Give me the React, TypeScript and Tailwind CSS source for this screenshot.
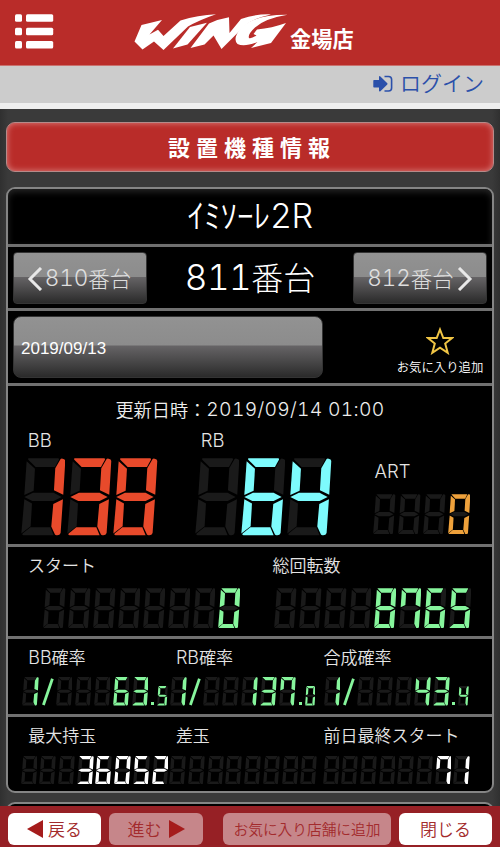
import clsx from 'clsx';
import type { ReactNode } from 'react';

// Segment order: top, upper left, upper right, middle, lower left, lower right, bottom
const SEGMENTS = [
  'M23 1H112Q115 2 114 5L102 27H44L22 5Q20 2 23 1Z',
  'M17 10L42 32L38 98L10 111Z',
  'M119 3Q121 1 125 2Q133 3 133 9L127 110L99 97L103 31Z',
  'M10 117L36 104H98L122 117L98 129H34Z',
  'M10 124L33 137L29 205L1 227Z',
  'M126 124L119 225Q117 232 109 232Q104 233 102 230L91 206L97 138Z',
  'M5 227L28 208H88L98 232H8Q2 232 5 227Z',
];

const LIT: Record<string, string> = {
  ' ': '0000000',
  '0': '1110111',
  '1': '0010010',
  '2': '1011101',
  '3': '1011011',
  '4': '0111010',
  '5': '1101011',
  '6': '1101111',
  '7': '1110010',
  '8': '1111111',
  '9': '1111011',
};

type DigitProps = { char: string; className: string };

const Digit = ({ char, className }: DigitProps) => (
  <svg viewBox="0 0 134 233" preserveAspectRatio="none" className={clsx('shrink-0', className)}>
    {SEGMENTS.map((d, i) => (
      <path key={i} d={d} fill={LIT[char][i] === '1' ? 'currentColor' : '#1a1a1a'} />
    ))}
  </svg>
);

const SIZES = {
  lg: { row: 'gap-[1.7px]', digit: 'w-[44.6px] h-[77.6px]' },
  md: { row: 'gap-[2.4px]', digit: 'w-[22.5px] h-[40.4px]' },
  sm: { row: 'gap-[1.9px]', digit: 'w-[16.8px] h-[28.6px]' },
};

type DisplayProps = { value: string; size: keyof typeof SIZES; className?: string };

const Display = ({ value, size, className }: DisplayProps) => (
  <div className={clsx('flex', SIZES[size].row, className)}>
    {value.split('').map((c, i) => (
      <Digit key={i} char={c} className={SIZES[size].digit} />
    ))}
  </div>
);

type RateProps = { label: ReactNode; whole: string; decimal: string; className?: string };

const Rate = ({ label, whole, decimal, className }: RateProps) => (
  <div className={className}>
    <Label>{label}</Label>
    <div className="-ml-[6px] mt-[10px] flex items-end text-[#86f59c]">
      <Digit char="1" className="h-[28.6px] w-[16.8px]" />
      <svg viewBox="0 0 12 28" className="ml-[2.8px] h-[28px] w-[12px] shrink-0">
        <path d="M1.4 27L10.4 .8" stroke="currentColor" strokeWidth="2.8" />
      </svg>
      <Display value={whole} size="sm" className="ml-[1.8px] !gap-[2.2px]" />
      <span className="mb-[1px] ml-[2.6px] size-[3px] shrink-0 bg-current" />
      <Digit char={decimal} className="ml-[3.1px] h-[19.5px] w-[10.8px]" />
    </div>
  </div>
);

const Label = ({ children }: { children: ReactNode }) => (
  <div className="h-[20px] whitespace-nowrap text-[17px] leading-[20px] text-[#e4e4e4]">{children}</div>
);

const Latin = ({ children, className }: { children: ReactNode; className?: string }) => (
  <span className={clsx("font-['Inter'] font-light tabular-nums", className)}>{children}</span>
);

const Logo = () => (
  <svg viewBox="0 0 154 40" className="h-[40px] w-[154px]" fill="#fff">
    <path d="M.5 28.5L7.5 12L28 7L15.5 21.5L24 16.8L29.5 23L46.5 7.5Q64 2 82 1.2Q64 7.5 54 13.5L29.5 37L20 28.5L8.5 36.5Z" />
    <path d="M39 35.5L56 14L73 9.7L53.5 31.5Z" />
    <path d="M56.5 35L75 10.5Q84 6 95 4.2L95.5 20L107 6Q122 .8 137 1.4Q120 5 111 12.5L87.5 36L79.5 22.5L70.5 31.5Z" />
    <path d="M153.5 1.8Q131 5.5 121 14.5Q113.5 21.5 115 25Q117 26 122.5 22.5L119.5 21L123 16.5Q138 15 152 10L137 30L117 35L123.5 29Q110 34.5 103.5 31Q98 25.5 107.5 14.5Q121 1.5 153.5 1.8Z" />
  </svg>
);

const Chevron = ({ d }: { d: string }) => (
  <svg viewBox="0 0 16 24" className="h-[24px] w-[16px] shrink-0" fill="none" stroke="#e8e8e8" strokeWidth="3">
    <path d={d} />
  </svg>
);

const GLOSS =
  'bg-[linear-gradient(#929292_0%,#8c8c8c_47%,#666466_48%,#4d4c4d_70%,#2a2a2a_100%)] border border-[#343434]';

const NAV = clsx(
  'flex h-[52px] w-[134px] items-center justify-center rounded-[4px] pt-[2px] text-[21.5px] leading-none text-[#dedede]',
  GLOSS,
);

const FOOT = 'flex h-[32px] items-center justify-center rounded-[6px] whitespace-nowrap leading-none text-[#a32b2d]';

export default function App() {
  return (
    <div className="flex h-[847px] w-[500px] flex-col overflow-hidden bg-[#383838] font-['Noto_Sans_CJK_JP',sans-serif] font-[350] text-white">
      <header className="flex h-[66px] shrink-0 items-start border-b border-[#c9716e] bg-[#b92c29] pt-[13px]">
        <svg viewBox="0 0 40 36" className="ml-[14px] mt-[1px] h-[36px] w-[40px]" fill="#fff">
          {[0.3, 13.8, 27].map((y) => (
            <g key={y}>
              <rect x="1" y={y} width="7" height="7.5" rx="1.5" />
              <rect x="12" y={y} width="27.2" height="7.5" rx="1.5" />
            </g>
          ))}
        </svg>
        <div className="ml-[80px]">
          <Logo />
        </div>
        <span className="ml-[2px] mt-[12px] text-[21.2px] font-bold leading-[26px]">金場店</span>
      </header>

      <div className="flex h-[43px] shrink-0 items-start justify-end border-b-[6px] border-[#eeeeee] bg-[#cccccc] pr-[16px] text-[#2b50aa]">
        <svg viewBox="0 0 20 18" className="mr-[7px] mt-[9px] h-[18px] w-[20px]">
          <path d="M1 5H6V1.5Q6.6 .8 7.4 1.4L14.3 8.2Q14.8 8.8 14.3 9.4L7.4 16.2Q6.6 16.8 6 16V12.6H1Q.3 12.6 .3 11.8V5.8Q.3 5 1 5Z" fill="currentColor" />
          <path d="M11.5 1.5H15.500Q18.600 1.500 18.600 4.500V13Q18.600 16 15.500 16H11.5" fill="none" stroke="currentColor" strokeWidth="1.6" />
        </svg>
        <span className="text-[21px] leading-[33px]">ログイン</span>
      </div>

      <main className="flex-1 overflow-hidden bg-[linear-gradient(90deg,#303030,#3a3a3a_8px,#3a3a3a_492px,#303030)] px-[6px] pt-[13px]">
        <h1 className="flex h-[50px] items-center justify-center rounded-[9px] border border-[#b58b8a] bg-[#b92c29] pb-[2px] pl-[4px] text-[22px] font-bold tracking-[6px] shadow-[inset_0_0_6px_#dc8583]">
          設置機種情報
        </h1>

        <section className="mt-[15px] flex h-[606px] flex-col rounded-[9px] border-2 border-[#858585] bg-black">
          <div className="flex h-[55px] items-center justify-center rounded-t-[7px] pb-[1px] text-[33px] leading-none shadow-[inset_0_3px_6px_#252525]">
            <span className="pb-[3px]">ｲﾐｿｰﾚ</span>
            <Latin className="text-[34px] tracking-[-.5px]">2R</Latin>
          </div>

          <div className="flex h-[64px] items-center justify-between border-t-[3px] border-[#707070] px-[5px]">
            <div className={NAV}>
              <Chevron d="M14 1L3 12L14 23" />
              <Latin className="ml-[2px] text-[22.5px]">810</Latin>
              <span className="mr-[2px] pb-[1px] font-light">番台</span>
            </div>
            <div className="flex items-center text-[32px] font-light leading-none">
              <Latin className="text-[35px] tracking-[-.5px]">811</Latin>
              <span className="pb-[4px]">番台</span>
            </div>
            <div className={NAV}>
              <Latin className="text-[22.5px]">812</Latin>
              <span className="mr-[3px] pb-[1px] font-light">番台</span>
              <Chevron d="M2 1L13 12L2 23" />
            </div>
          </div>

          <div className="flex h-[75px] items-start border-t-[3px] border-[#707070] pl-[5px] pt-[5px]">
            <div className={clsx("flex h-[62px] w-[310px] items-center rounded-[8px] pl-[7px] pt-[3px] font-['Liberation_Sans'] text-[17px]", GLOSS)}>
              2019/09/13
            </div>
            <div className="ml-auto mr-[2px] flex w-[100px] flex-col items-center pt-[11px]">
              <svg viewBox="0 0 28 28" className="h-[28px] w-[28px]" fill="none" stroke="#f0c545" strokeWidth="2">
                <path d="M14 2.5L17.3 11H26L19.2 16.6L21.7 25.8L14 20.6L6.3 25.8L8.8 16.6L2 11H10.7Z" />
              </svg>
              <span className="mt-[5px] whitespace-nowrap text-[12.4px] leading-[15px]">お気に入り追加</span>
            </div>
          </div>

          <div className="flex h-[161px] flex-col border-t-[3px] border-[#707070]">
            <div className="mt-[13px] flex h-[22px] items-center justify-center whitespace-nowrap text-[18.2px] leading-none text-[#eeeeee]">
              <span className="pb-[2px]">更新日時：</span>
              <Latin className="text-[19.3px] tracking-[.3px]">2019/09/14 01:00</Latin>
            </div>
            <div className="mt-[9px] flex">
              <div className="ml-[19.8px] w-[173px]">
                <Label>
                  <Latin className="text-[18.5px]">BB</Latin>
                </Label>
                <Display value="138" size="lg" className="-ml-[7.1px] mt-[8px] text-[#e84a2b]" />
              </div>
              <div className="w-[173px]">
                <Label>
                  <Latin className="text-[18.5px]">RB</Latin>
                </Label>
                <Display value=" 64" size="lg" className="-ml-[6.3px] mt-[8px] text-[#7dfbfd]" />
              </div>
              <div className="ml-[.7px] pt-[31px]">
                <Label>
                  <Latin className="text-[18.5px]">ART</Latin>
                </Label>
                <Display value="   0" size="md" className="-ml-[1.2px] mt-[13px] text-[#eea13b]" />
              </div>
            </div>
          </div>

          <div className="flex h-[92px] border-t-[3px] border-[#707070] pl-[20px] pt-[8px]">
            <div className="w-[244px]">
              <Label>スタート</Label>
              <Display value="       0" size="md" className="ml-[15.3px] mt-[12.7px] text-[#86f59c]" />
            </div>
            <div className="pl-[.6px]">
              <Label>総回転数</Label>
              <Display value="    8765" size="md" className="ml-[1.7px] mt-[12.7px] text-[#86f59c]" />
            </div>
          </div>

          <div className="flex h-[78px] border-t-[3px] border-[#707070] pl-[20.2px] pt-[8px]">
            <Rate label={<><Latin className="text-[18px]">BB</Latin>確率</>} whole="   63" decimal="5" className="w-[147.7px]" />
            <Rate label={<><Latin className="text-[18px]">RB</Latin>確率</>} whole="  137" decimal="0" className="w-[147.7px]" />
            <Rate label="合成確率" whole="   43" decimal="4" className="[&>div:last-child]:translate-x-[6px]" />
          </div>

          <div className="flex h-[77px] border-t-[3px] border-[#707070] pl-[20.2px] pt-[8px]">
            <div className="w-[147.7px]">
              <Label>最大持玉</Label>
              <Display value="   36052" size="sm" className="-ml-[7.5px] mt-[10.5px]" />
            </div>
            <div className="w-[147.7px]">
              <Label>差玉</Label>
              <Display value="        " size="sm" className="-ml-[6.5px] mt-[10.5px]" />
            </div>
            <div>
              <Label>前日最終スタート</Label>
              <Display value="      71" size="sm" className="-ml-[1px] mt-[10.5px]" />
            </div>
          </div>
        </section>

        <section className="mt-[9px] h-[40px] rounded-[9px] border-2 border-[#858585] bg-black" />
      </main>

      <footer className="flex h-[41px] shrink-0 items-start bg-[#962025] pl-[8px] pt-[7px]">
        <button className={clsx(FOOT, 'w-[93px] gap-[5px] bg-white text-[17px]')}>
          <svg viewBox="0 0 16 18" className="h-[18px] w-[16px]" fill="#a51c1c">
            <path d="M0 9L16 0V18Z" />
          </svg>
          <span className="pb-[2px]">戻る</span>
        </button>
        <button className={clsx(FOOT, 'ml-[8px] w-[94px] gap-[7px] bg-[#c6868a] text-[17px]')}>
          <span className="pb-[2px]">進む</span>
          <svg viewBox="0 0 16 18" className="h-[18px] w-[16px]" fill="#a51c1c">
            <path d="M16 9L0 0V18Z" />
          </svg>
        </button>
        <button className={clsx(FOOT, 'ml-[20px] w-[168px] bg-[#c6868a] text-[14.7px]')}>お気に入り店舗に追加</button>
        <button className={clsx(FOOT, 'ml-[8px] w-[93px] bg-white pb-[1px] text-[17px]')}>閉じる</button>
      </footer>
    </div>
  );
}
